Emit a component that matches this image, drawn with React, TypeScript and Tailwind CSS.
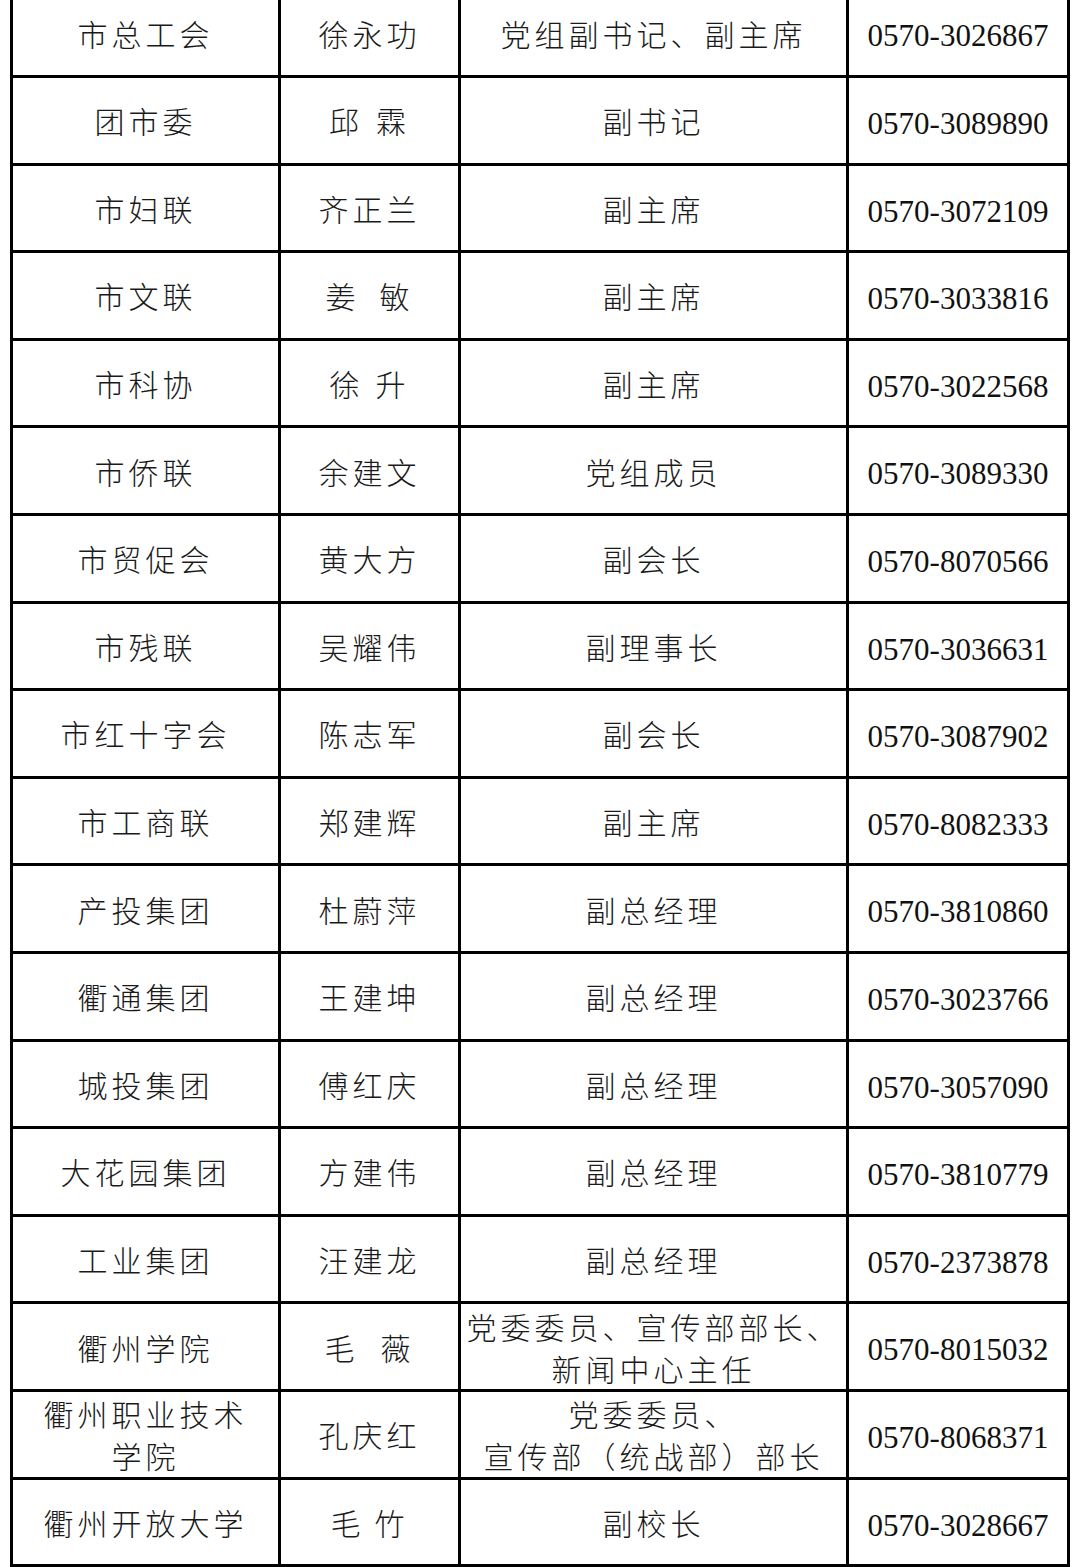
// [org, name, gap between the two name characters, title, phone]
const rows: [string, string, string, string, string][] = [
  ['市总工会', '徐永功', '', '党组副书记、副主席', '0570-3026867'],
  ['团市委', '邱霖', 'w-[13px]', '副书记', '0570-3089890'],
  ['市妇联', '齐正兰', '', '副主席', '0570-3072109'],
  ['市文联', '姜敏', 'w-[20px]', '副主席', '0570-3033816'],
  ['市科协', '徐升', 'w-[12px]', '副主席', '0570-3022568'],
  ['市侨联', '余建文', '', '党组成员', '0570-3089330'],
  ['市贸促会', '黄大方', '', '副会长', '0570-8070566'],
  ['市残联', '吴耀伟', '', '副理事长', '0570-3036631'],
  ['市红十字会', '陈志军', '', '副会长', '0570-3087902'],
  ['市工商联', '郑建辉', '', '副主席', '0570-8082333'],
  ['产投集团', '杜蔚萍', '', '副总经理', '0570-3810860'],
  ['衢通集团', '王建坤', '', '副总经理', '0570-3023766'],
  ['城投集团', '傅红庆', '', '副总经理', '0570-3057090'],
  ['大花园集团', '方建伟', '', '副总经理', '0570-3810779'],
  ['工业集团', '汪建龙', '', '副总经理', '0570-2373878'],
  ['衢州学院', '毛薇', 'w-[22px]', '党委委员、宣传部部长、\n新闻中心主任', '0570-8015032'],
  ['衢州职业技术\n学院', '孔庆红', '', '党委委员、\n宣传部（统战部）部长', '0570-8068371'],
  ['衢州开放大学', '毛竹', 'w-[10px]', '副校长', '0570-3028667'],
];

const cjk =
  "bg-white flex items-center justify-center text-center whitespace-pre-wrap font-['Noto_Sans_CJK_SC',sans-serif] font-light text-[30px] leading-[42px] tracking-[4px] text-[#1a1a1a]";

export default function App() {
  return (
    <div className="w-[1080px] h-[1567px] overflow-hidden bg-white">
      {/* table body, top border sits just above the viewport */}
      <div className="ml-[10px] mt-[-12.6px] w-[1060px] bg-black p-[3px] grid grid-cols-[265px_177px_385px_218px] auto-rows-[84.6px] gap-[3px]">
        {rows.map(([org, name, gap, title, phone], i) => (
          <div key={i} className="contents">
            <div className={cjk}>{org}</div>
            <div className={cjk}>
              {gap ? (
                <>
                  {name[0]}
                  <span className={`inline-block ${gap}`} />
                  {name[1]}
                </>
              ) : (
                name
              )}
            </div>
            <div className={cjk}>{title}</div>
            <div className="bg-white flex items-center justify-center pt-[8px] font-['Liberation_Serif',serif] text-[31px] text-[#111]">
              {phone}
            </div>
          </div>
        ))}
      </div>
    </div>
  );
}
